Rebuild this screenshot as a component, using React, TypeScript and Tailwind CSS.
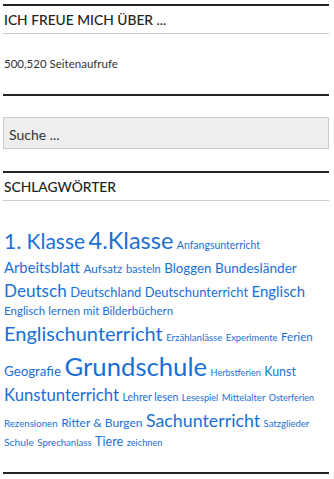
const tags: { label: string; size: number }[] = [
  { label: "1. Klasse", size: 21 },
  { label: "4.Klasse", size: 23.5 },
  { label: "Anfangsunterricht", size: 10.5 },
  { label: "Arbeitsblatt", size: 14.8 },
  { label: "Aufsatz", size: 11.8 },
  { label: "basteln", size: 11 },
  { label: "Bloggen", size: 13.3 },
  { label: "Bundesländer", size: 13.6 },
  { label: "Deutsch", size: 17.1 },
  { label: "Deutschland", size: 12.9 },
  { label: "Deutschunterricht", size: 12.9 },
  { label: "Englisch", size: 14.9 },
  { label: "Englisch lernen mit Bilderbüchern", size: 11.5 },
  { label: "Englischunterricht", size: 20 },
  { label: "Erzählanlässe", size: 9.6 },
  { label: "Experimente", size: 9.3 },
  { label: "Ferien", size: 11.6 },
  { label: "Geografie", size: 13.3 },
  { label: "Grundschule", size: 25.7 },
  { label: "Herbstferien", size: 9.1 },
  { label: "Kunst", size: 12.4 },
  { label: "Kunstunterricht", size: 16.7 },
  { label: "Lehrer lesen", size: 10.5 },
  { label: "Lesespiel", size: 9.2 },
  { label: "Mittelalter", size: 9.5 },
  { label: "Osterferien", size: 9 },
  { label: "Rezensionen", size: 9.7 },
  { label: "Ritter & Burgen", size: 12 },
  { label: "Sachunterricht", size: 17.8 },
  { label: "Satzglieder", size: 9.5 },
  { label: "Schule", size: 10.3 },
  { label: "Sprechanlass", size: 9.6 },
  { label: "Tiere", size: 12.6 },
  { label: "zeichnen", size: 9.2 },
];

function WidgetTitle({ children }: { children: React.ReactNode }) {
  return (
    <h2 className="h-[28px] leading-[28px] border-b border-[#cccccc] text-[13.8px] font-medium uppercase text-[#222222] pl-[1px]">
      {children}
    </h2>
  );
}

export default function App() {
  return (
    <div
      className="w-[334px] min-h-[479px] bg-white pt-[4px] pl-[3px] pr-[5px] text-[#333333]"
      style={{ fontFamily: "Lato, 'Open Sans', sans-serif" }}
    >
      {/* Besucherzähler */}
      <section className="border-t-2 border-[#222222]">
        <WidgetTitle>Ich freue mich über ...</WidgetTitle>
        <p className="py-[20px] leading-[20px] text-[11.5px] pl-[1px]">500,520 Seitenaufrufe</p>
      </section>

      {/* Suche */}
      <section className="border-t-2 border-[#222222] pt-[21px] pb-[22px]">
        <input
          type="search"
          placeholder="Suche ..."
          className="block w-full h-[32px] border border-[#cccccc] bg-[#eeeeee] px-[5px] pt-[3px] text-[14px] text-[#333333] placeholder:text-[#333333] outline-none"
        />
      </section>

      {/* Schlagwörter */}
      <section className="border-t-2 border-[#222222]">
        <WidgetTitle>Schlagwörter</WidgetTitle>
        <div className="flex flex-wrap items-baseline gap-x-[3.5px] pt-[23px] pb-[21px] pl-[1px]">
          {tags.map((t) => (
            <a
              key={t.label}
              href="#"
              className="whitespace-nowrap leading-[1.42] text-[#1a6fd6]"
              style={{ fontSize: t.size }}
            >
              {t.label}
            </a>
          ))}
        </div>
      </section>

      <div className="border-t-2 border-[#222222]" />
    </div>
  );
}
